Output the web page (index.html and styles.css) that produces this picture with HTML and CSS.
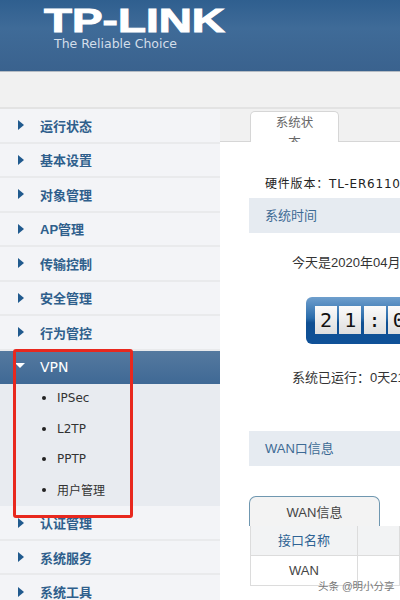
FILE: index.html
```html
<!DOCTYPE html>
<html lang="zh-CN">
<head>
  <meta charset="UTF-8" />
  <meta name="viewport" content="width=device-width, initial-scale=1.0"/>
  <title>TP-LINK</title>
  <link rel="stylesheet" href="styles.css">
</head>
<body>
  <div class="header">
    <div class="logo">TP-LINK</div>
    <div class="slogan">The Reliable Choice</div>
  </div>
  <div class="band"></div>

  <div class="main">
    <div class="sidebar">
      <div class="menu-item"><span class="arrow"></span>运行状态</div>
      <div class="menu-item"><span class="arrow"></span>基本设置</div>
      <div class="menu-item"><span class="arrow"></span>对象管理</div>
      <div class="menu-item"><span class="arrow"></span>AP管理</div>
      <div class="menu-item"><span class="arrow"></span>传输控制</div>
      <div class="menu-item"><span class="arrow"></span>安全管理</div>
      <div class="menu-item"><span class="arrow"></span>行为管控</div>
      <div class="menu-item active"><span class="arrow-down"></span>VPN</div>
      <div class="submenu">
        <div class="sub-item">IPSec</div>
        <div class="sub-item">L2TP</div>
        <div class="sub-item">PPTP</div>
        <div class="sub-item">用户管理</div>
      </div>
      <div class="menu-item"><span class="arrow"></span>认证管理</div>
      <div class="menu-item"><span class="arrow"></span>系统服务</div>
      <div class="menu-item"><span class="arrow"></span>系统工具</div>
      <div class="highlight"></div>
    </div>

    <div class="content">
      <div class="tab-bar">
        <div class="tab">系统状态</div>
      </div>
      <div class="version">硬件版本：TL-ER6110G</div>
      <div class="section-title">系统时间</div>
      <div class="today">今天是2020年04月</div>
      <div class="clock">
        <span class="digit">2</span>
        <span class="digit">1</span>
        <span class="digit">:</span>
        <span class="digit">0</span>
      </div>
      <div class="uptime">系统已运行：0天21</div>
      <div class="section-title wan-title">WAN口信息</div>
      <div class="wan-tab">WAN信息</div>
      <div class="wan-table">
        <div class="cell head">接口名称</div>
        <div class="cell head"></div>
        <div class="cell">WAN</div>
        <div class="cell"></div>
      </div>
    </div>
  </div>

  <div class="watermark">头条 @明小分享</div>
</body>
</html>
```

FILE: styles.css
```css
html, body {
  height: 100%;
}
body {
  margin: 0;
  position: relative;
  overflow: hidden;
  font-family: "Liberation Sans", "Noto Sans CJK SC", sans-serif;
  font-size: 13px;
  background: #fff;
  color: #222;
}
.header {
  height: 72px;
  padding-left: 44px;
  box-sizing: border-box;
  background: linear-gradient(#2f5f8f, #3f6b98 40%, #3a628e);
  border-bottom: 1px solid #b5bcc4;
  overflow: hidden;
}
.logo {
  margin-top: 6px;
  font-size: 33px;
  line-height: 30px;
  font-weight: bold;
  color: #fff;
  -webkit-text-stroke: 1px #fff;
  transform: scaleX(1.39);
  transform-origin: left center;
}
.slogan {
  margin: 1px 0 0 10px;
  font-family: "DejaVu Sans", sans-serif;
  font-size: 12.5px;
  line-height: 14px;
  color: #d3deea;
}
.band {
  height: 35px;
  background: #f1f1f1;
  border-bottom: 2px solid #e3e3e3;
}
.main {
  display: flex;
}
.sidebar {
  position: relative;
  flex: none;
  width: 220px;
  background: #f3f4f7;
}
.menu-item {
  display: flex;
  align-items: center;
  height: 32.5px;
  padding-left: 18px;
  border-bottom: 2px solid #e9eaec;
  font-size: 13px;
  font-weight: bold;
  color: #2f5f8c;
}
.arrow {
  width: 0;
  height: 0;
  margin-right: 16px;
  border-left: 6px solid #205a8e;
  border-top: 5px solid transparent;
  border-bottom: 5px solid transparent;
}
.arrow-down {
  width: 0;
  height: 0;
  margin: 0 15px 4px -3px;
  border-top: 5px solid #fff;
  border-left: 5px solid transparent;
  border-right: 5px solid transparent;
}
.menu-item.active {
  height: 33px;
  border-bottom: 0;
  background: linear-gradient(#55799f, #3f6995);
  color: #fff;
  font-family: "DejaVu Sans", sans-serif;
  font-weight: normal;
  font-size: 14px;
}
.submenu {
  background: #e8ebf0;
}
.sub-item {
  display: flex;
  align-items: center;
  height: 30.7px;
  padding: 0 0 2px 42px;
  box-sizing: border-box;
  font-family: "DejaVu Sans", "Noto Sans CJK SC", sans-serif;
  font-size: 12px;
  color: #333;
}
.sub-item::before {
  content: "";
  width: 4px;
  height: 4px;
  margin-right: 11px;
  border-radius: 50%;
  background: #222;
}
.highlight {
  position: absolute;
  left: 13px;
  top: 240px;
  width: 120px;
  height: 169px;
  box-sizing: border-box;
  border: 3px solid #e8281e;
  border-radius: 3px;
}
.content {
  flex: 1;
  min-width: 0;
  overflow: hidden;
}
.tab-bar {
  display: flex;
  align-items: flex-end;
  height: 34px;
  margin-top: -2px;
  padding-left: 30px;
  background: #f1f1f1;
  border-bottom: 1px solid #d6d6d6;
}
.tab {
  width: 89px;
  height: 31px;
  margin-bottom: -1px;
  padding: 1px 24px 0;
  box-sizing: border-box;
  overflow: hidden;
  text-align: center;
  font-size: 12.5px;
  line-height: 20px;
  color: #666;
  background: #fff;
  border: 1px solid #d6d6d6;
  border-bottom: 0;
  border-radius: 5px 5px 0 0;
}
.version {
  margin: 33px 0 0 45px;
  line-height: 18px;
  white-space: nowrap;
  font-family: "DejaVu Sans", "Noto Sans CJK SC", sans-serif;
  font-size: 12px;
  letter-spacing: 0.8px;
  color: #222;
}
.section-title {
  height: 35px;
  margin: 5px 0 0 29px;
  padding-left: 16px;
  line-height: 35px;
  background: #e6ebf1;
  color: #3d6a94;
  font-size: 13px;
}
.today {
  margin: 21px 0 0 72px;
  line-height: 18px;
  white-space: nowrap;
  color: #333;
  font-size: 13px;
}
.clock {
  display: flex;
  gap: 2.3px;
  width: 200px;
  height: 47px;
  margin: 25px 0 0 86px;
  padding: 9px 0 0 9px;
  box-sizing: border-box;
  border-radius: 6px;
  background: linear-gradient(#6f9fcd, #2a6cab 45%, #0f4f92 55%, #0f5198);
}
.digit {
  flex: none;
  width: 22px;
  height: 28px;
  line-height: 28px;
  text-align: center;
  font-family: "DejaVu Sans Mono", monospace;
  font-size: 20px;
  color: #111;
  background: linear-gradient(#fbfbfb, #dedede);
}
.uptime {
  margin: 25px 0 0 72px;
  line-height: 18px;
  white-space: nowrap;
  color: #333;
  font-size: 13px;
}
.wan-title {
  margin-top: 44px;
}
.wan-tab {
  width: 131px;
  height: 30px;
  margin: 30px 0 0 29px;
  box-sizing: border-box;
  line-height: 31px;
  text-align: center;
  color: #444;
  font-size: 13px;
  background: #f3f3f3;
  border: 1px solid #6f97b0;
  border-bottom: 0;
  border-radius: 7px 7px 0 0;
}
.wan-table {
  display: grid;
  grid-template-columns: 107px 1fr;
  margin-left: 30px;
  border-left: 1px solid #dcdcdc;
}
.cell {
  height: 29px;
  line-height: 29px;
  text-align: center;
  border-right: 1px solid #dcdcdc;
  border-bottom: 1px solid #dcdcdc;
  color: #444;
}
.cell.head {
  background: #f2f3f4;
  color: #2f6394;
}
.watermark {
  position: absolute;
  left: 318px;
  top: 579px;
  font-size: 10.5px;
  line-height: 14px;
  color: #777;
}
```
